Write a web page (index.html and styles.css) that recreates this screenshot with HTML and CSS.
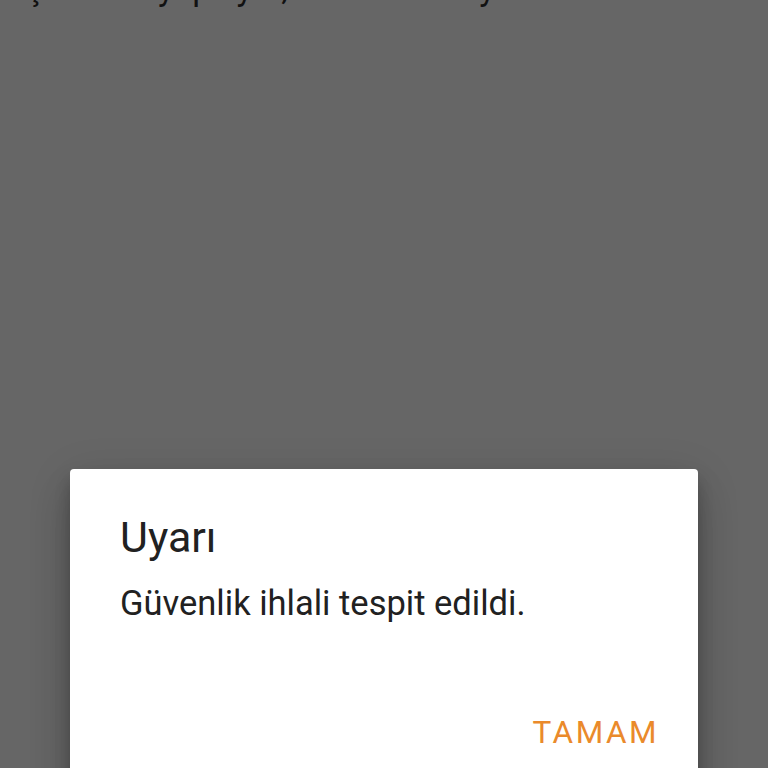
FILE: index.html
```html
<!DOCTYPE html>
<html lang="tr">
<head>
<meta charset="utf-8">
<title>Uyarı</title>
<link rel="stylesheet" href="styles.css">
</head>
<body>
<div class="screen">
  <p class="behind">çok hızlı yapılıyor, ancak bunu yeniden</p>
  <div class="dialog">
    <h1 class="title">Uyarı</h1>
    <p class="message">Güvenlik ihlali tespit edildi.</p>
    <div class="actions">
      <button class="btn">TAMAM</button>
    </div>
  </div>
</div>
</body>
</html>
```

FILE: styles.css
```css
html, body {
  margin: 0;
  padding: 0;
  background: #666666;
  overflow: hidden;
}
.screen {
  width: 768px;
  height: 768px;
  overflow: hidden;
  font-family: Roboto, "Noto Sans", sans-serif;
}
.behind {
  margin: -32px 0 0 0;
  padding-left: 26px;
  font-size: 34px;
  line-height: 40px;
  color: #111;
  white-space: nowrap;
}
.dialog {
  margin: 461px 0 0 70px;
  width: 628px;
  height: 360px;
  box-sizing: border-box;
  padding: 43px 40px 0 50px;
  background: #ffffff;
  border-radius: 4px;
  box-shadow: 0 11px 15px rgba(0,0,0,.2), 0 24px 38px rgba(0,0,0,.14), 0 9px 46px rgba(0,0,0,.12);
  display: flex;
  flex-direction: column;
}
.title {
  margin: 0;
  font-size: 43px;
  line-height: 50px;
  font-weight: 400;
  color: #212121;
}
.message {
  margin: 21px 0 0 0;
  font-size: 34.5px;
  line-height: 40px;
  color: #212121;
}
.actions {
  display: flex;
  justify-content: flex-end;
  margin-top: 90px;
}
.btn {
  border: 0;
  background: none;
  padding: 0;
  margin-right: -1px;
  font-family: Roboto, "Noto Sans", sans-serif;
  font-size: 31.5px;
  line-height: 40px;
  letter-spacing: 2.5px;
  color: #ea8a2b;
}
```
